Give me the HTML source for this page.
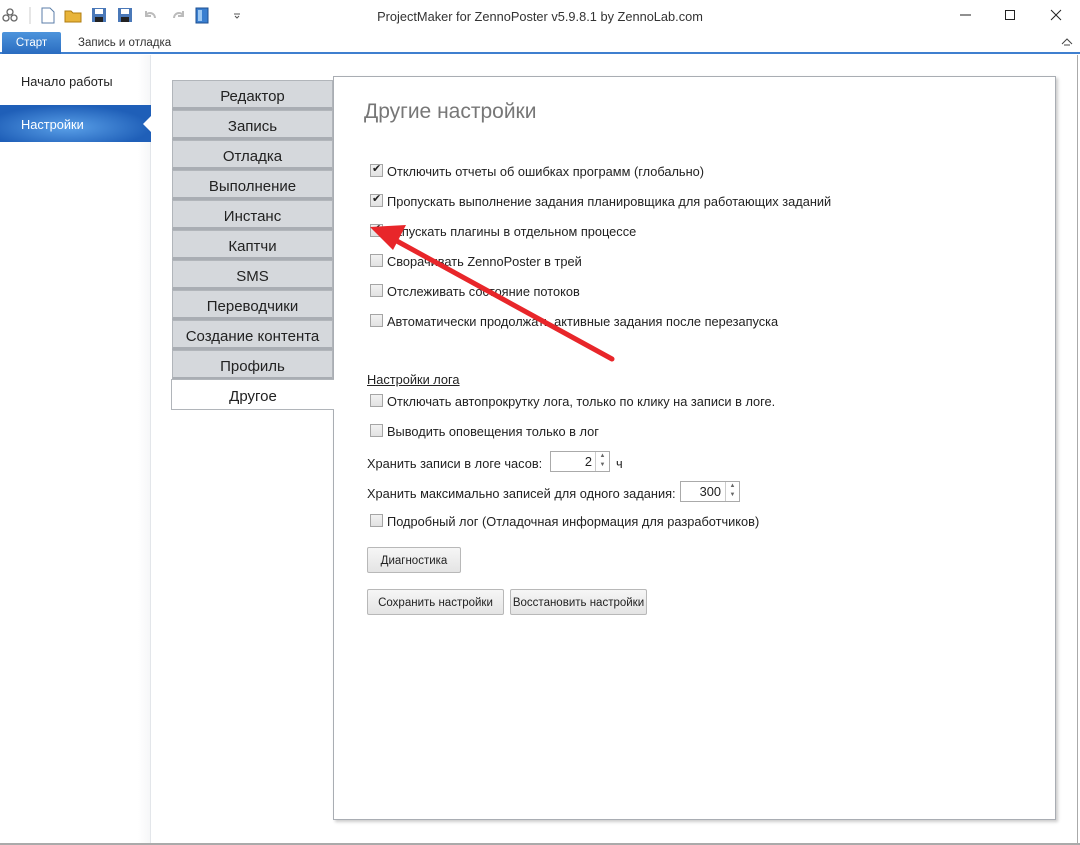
<!DOCTYPE html>
<html><head><meta charset="utf-8"><style>
*{margin:0;padding:0;box-sizing:border-box}
body{width:1080px;height:845px;position:relative;background:#fff;font-family:"Liberation Sans","DejaVu Sans",sans-serif;font-size:12.8px;color:#222;overflow:hidden}
.abs{position:absolute}
.title{left:0;top:1px;width:1080px;height:31px;text-align:center;line-height:31px;font-size:12.8px;color:#333}
.tabbar{left:0;top:31px;width:1080px;height:23px;border-bottom:2px solid #3f7fcf}
.start{left:2px;top:32px;width:59px;height:22px;background:linear-gradient(#4d94dc,#2a6cc0);color:#fff;font-size:11.5px;line-height:23px;text-align:center;border-radius:2px 2px 0 0}
.rec{left:78px;top:31px;line-height:25px;font-size:11.5px;color:#333}
.left{left:0;top:55px;width:151px;height:790px;border-right:1px solid #e3e6ea;background:linear-gradient(90deg,#fff 92%,#f6f7f8)}
.li{left:0;width:151px;height:38px;line-height:40px;padding-left:21px;font-size:12.8px}
.sel{top:105px;height:37px;background:radial-gradient(ellipse at 45% 60%,#5aa0e8,#1f5fb8 70%);color:#fff}
.tab{left:172px;width:161px;height:30px;background:#d5d8dc;border:1px solid #b1b5ba;border-bottom:3px solid #a9adb3;text-align:center;line-height:31px;font-size:15px;color:#222}
.panel{left:333px;top:76px;width:723px;height:744px;border:1px solid #a9adb3;box-shadow:2px 2px 3px #ccc;background:#fff}
h1{position:absolute;left:364px;top:100px;font-weight:normal;font-size:21px;color:#777}
.cb{left:370px;width:13px;height:13px;border:1px solid #a5a5a5;background:linear-gradient(#f2f2f2,#e2e2e2)}
.cb.c::after{content:"✔";position:absolute;left:1px;top:-3px;font-size:11px;color:#222}
.lbl{left:387px;font-size:12.8px}
.btn{height:26px;border:1px solid #b8b8b8;border-radius:2px;background:linear-gradient(#f6f6f6,#e4e4e4);font-size:11.5px;text-align:center;line-height:26px;color:#222}
.spin{height:21px;border:1px solid #aaa;background:#fff;text-align:right;font-size:12.8px;line-height:20px}
.spin span{position:absolute;right:0;top:0;width:14px;height:19px;border-left:1px solid #ccc;font-size:6px;line-height:9px;text-align:center;color:#666}
</style></head><body>
<div class="abs title">ProjectMaker for ZennoPoster v5.9.8.1 by ZennoLab.com</div>
<svg class="abs" style="left:0;top:0" width="250" height="31">
<g fill="none" stroke="#666" stroke-width="1.3"><circle cx="10" cy="12" r="3"/><circle cx="6" cy="18" r="3"/><circle cx="14" cy="18" r="3"/></g>
<line x1="30" y1="7" x2="30" y2="24" stroke="#ccc"/>
<path d="M42 8h8l4 4v11h-12z" fill="#fff" stroke="#5b7ea8"/>
<path d="M65 11h6l2 2h8v9h-16z" fill="#e8b43a" stroke="#b07d10"/>
<rect x="92" y="8" width="14" height="14" fill="#4a78b8"/><rect x="95" y="9" width="8" height="5" fill="#fff"/><rect x="95" y="17" width="8" height="5" fill="#222"/>
<rect x="118" y="8" width="14" height="14" fill="#4a78b8"/><rect x="121" y="9" width="8" height="5" fill="#fff"/><rect x="121" y="17" width="8" height="5" fill="#222"/>
<path d="M146 15a5 5 0 0 1 9 3M146 11v5h5" fill="none" stroke="#bbb" stroke-width="2"/>
<path d="M183 15a5 5 0 0 0 -9 3M183 11v5h-5" fill="none" stroke="#bbb" stroke-width="2"/>
<rect x="196" y="8" width="12" height="15" fill="#3a7fd0" stroke="#1d4f90"/><rect x="198" y="10" width="4" height="11" fill="#9cc8f3"/>
<path d="M234 14h6M235 16l2 2 2-2" stroke="#555" fill="none"/>
</svg>
<svg class="abs" style="left:955px;top:5px" width="120" height="20" stroke="#222" fill="none"><line x1="5" y1="10" x2="16" y2="10"/><rect x="50.5" y="5.5" width="9" height="9"/><path d="M96 5l10 10M106 5l-10 10"/></svg>
<div class="abs tabbar"></div>
<div class="abs start">Старт</div>
<div class="abs rec">Запись и отладка</div>
<svg class="abs" style="left:1061px;top:37px" width="12" height="10"><path d="M1 7l5-5 5 5M3 8h6" stroke="#444" fill="none"/></svg>
<div class="abs left"></div>
<div class="abs li" style="top:62px">Начало работы</div>
<div class="abs li sel">Настройки</div>
<svg class="abs" style="left:142px;top:115px" width="10" height="18"><path d="M10 0L1 9l9 9z" fill="#fff"/></svg>
<div class="abs panel"></div>
<div class="abs tab" style="top:80px">Редактор</div>
<div class="abs tab" style="top:110px">Запись</div>
<div class="abs tab" style="top:140px">Отладка</div>
<div class="abs tab" style="top:170px">Выполнение</div>
<div class="abs tab" style="top:200px">Инстанс</div>
<div class="abs tab" style="top:230px">Каптчи</div>
<div class="abs tab" style="top:260px">SMS</div>
<div class="abs tab" style="top:290px">Переводчики</div>
<div class="abs tab" style="top:320px">Создание контента</div>
<div class="abs tab" style="top:350px">Профиль</div>
<div class="abs tab" style="top:379px;left:171px;width:163px;height:31px;background:#fff;border-right:none;border-bottom:1px solid #b1b5ba;line-height:33px">Другое</div>
<h1>Другие настройки</h1>
<div class="abs cb c" style="top:164px"></div><div class="abs lbl" style="top:164px">Отключить отчеты об ошибках программ (глобально)</div>
<div class="abs cb c" style="top:194px"></div><div class="abs lbl" style="top:194px">Пропускать выполнение задания планировщика для работающих заданий</div>
<div class="abs cb c" style="top:224px"></div><div class="abs lbl" style="top:224px">Запускать плагины в отдельном процессе</div>
<div class="abs cb" style="top:254px"></div><div class="abs lbl" style="top:254px">Сворачивать ZennoPoster в трей</div>
<div class="abs cb" style="top:284px"></div><div class="abs lbl" style="top:284px">Отслеживать состояние потоков</div>
<div class="abs cb" style="top:314px"></div><div class="abs lbl" style="top:314px">Автоматически продолжать активные задания после перезапуска</div>
<div class="abs" style="left:367px;top:372px;text-decoration:underline">Настройки лога</div>
<div class="abs cb" style="top:394px"></div><div class="abs lbl" style="top:394px">Отключать автопрокрутку лога, только по клику на записи в логе.</div>
<div class="abs cb" style="top:424px"></div><div class="abs lbl" style="top:424px">Выводить оповещения только в лог</div>
<div class="abs" style="left:367px;top:456px">Хранить записи в логе часов:</div>
<div class="abs spin" style="left:550px;top:451px;width:60px;padding-right:17px">2<span>▲<br>▼</span></div>
<div class="abs" style="left:616px;top:456px">ч</div>
<div class="abs" style="left:367px;top:486px">Хранить максимально записей для одного задания:</div>
<div class="abs spin" style="left:680px;top:481px;width:60px;padding-right:18px">300<span>▲<br>▼</span></div>
<div class="abs cb" style="top:514px"></div><div class="abs lbl" style="top:514px">Подробный лог (Отладочная информация для разработчиков)</div>
<div class="abs btn" style="left:367px;top:547px;width:94px">Диагностика</div>
<div class="abs btn" style="left:367px;top:589px;width:137px">Сохранить настройки</div>
<div class="abs btn" style="left:510px;top:589px;width:137px">Восстановить настройки</div>
<svg class="abs" style="left:0;top:0" width="1080" height="845"><line x1="612" y1="359" x2="395" y2="240" stroke="#e8262a" stroke-width="5" stroke-linecap="round"/><path d="M370 227L406 225L393 250z" fill="#e8262a"/></svg>
<div class="abs" style="left:0;top:843px;width:1080px;height:2px;background:#aaa"></div>
<div class="abs" style="left:1077px;top:55px;width:1px;height:790px;background:#aaa"></div>
</body></html>
